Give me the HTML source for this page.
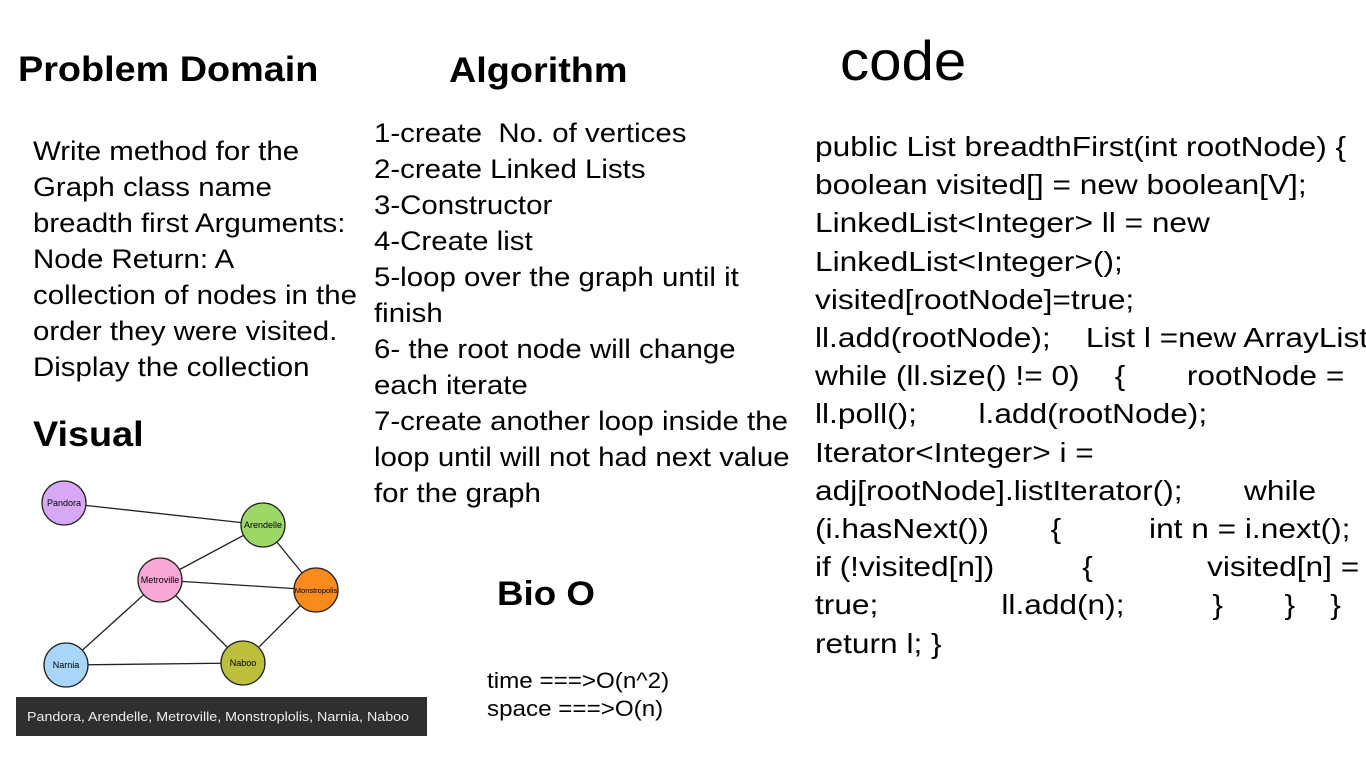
<!DOCTYPE html>
<html><head><meta charset="utf-8"><style>
body{margin:0;width:1366px;height:768px;background:#fff;position:relative;overflow:hidden;font-family:"Liberation Sans",sans-serif;color:#000}
.a{position:absolute;white-space:pre;transform-origin:0 0}
.h{font-weight:bold;font-size:35px;transform:scaleX(1.08)}
.t{font-size:27px;line-height:36px;transform:scaleX(1.09)}
</style></head><body>
<div class="a h" style="left:18px;top:50px">Problem Domain</div>
<div class="a h" style="left:449px;top:51px">Algorithm</div>
<div class="a" style="left:840px;top:28px;font-size:56px;transform:scaleX(1.04)">code</div>
<div class="a t" style="left:33px;top:133px">Write method for the
Graph class name
breadth first Arguments:
Node Return: A
collection of nodes in the
order they were visited.
Display the collection</div>
<div class="a h" style="left:33px;top:415px">Visual</div>
<div class="a t" style="left:374px;top:115px">1-create  No. of vertices
2-create Linked Lists
3-Constructor
4-Create list
5-loop over the graph until it
finish
6- the root node will change
each iterate
7-create another loop inside the
loop until will not had next value
for the graph</div>
<div class="a h" style="left:497px;top:575px;font-size:34px">Bio O</div>
<div class="a" style="left:487px;top:667px;font-size:22px;line-height:28px;transform:scaleX(1.1)">time ===&gt;O(n^2)
space ===&gt;O(n)</div>
<div class="a" style="left:815px;top:128px;line-height:38.2px;font-size:28px;transform:scaleX(1.13)">public List breadthFirst(int rootNode) {
boolean visited[] = new boolean[V];
LinkedList&lt;Integer&gt; ll = new
LinkedList&lt;Integer&gt;();
visited[rootNode]=true;
ll.add(rootNode);    List l =new ArrayList
while (ll.size() != 0)    {       rootNode =
ll.poll();       l.add(rootNode);
Iterator&lt;Integer&gt; i =
adj[rootNode].listIterator();       while
(i.hasNext())       {          int n = i.next();
if (!visited[n])          {             visited[n] =
true;              ll.add(n);          }       }    }
return l; }</div>
<svg class="a" style="left:0;top:0" width="440" height="740">
<g stroke="#222" stroke-width="1.3">
<line x1="64" y1="503" x2="263" y2="525"/>
<line x1="263" y1="525" x2="160" y2="580"/>
<line x1="263" y1="525" x2="316" y2="590"/>
<line x1="160" y1="580" x2="316" y2="590"/>
<line x1="160" y1="580" x2="66" y2="665"/>
<line x1="160" y1="580" x2="243" y2="663"/>
<line x1="66" y1="665" x2="243" y2="663"/>
<line x1="316" y1="590" x2="243" y2="663"/>
</g>
<g stroke="#222" stroke-width="1.3">
<circle cx="64" cy="503" r="22" fill="#d7a8f5"/>
<circle cx="263" cy="525" r="22" fill="#9dd866"/>
<circle cx="160" cy="580" r="22" fill="#f7a8d6"/>
<circle cx="316" cy="590" r="22" fill="#fb8a1c"/>
<circle cx="66" cy="665" r="22" fill="#a8d6f8"/>
<circle cx="243" cy="663" r="22" fill="#bcbf3c"/>
</g>
<g font-size="9" font-family="Liberation Sans" text-anchor="middle" fill="#000">
<text x="64" y="506">Pandora</text>
<text x="263" y="528">Arendelle</text>
<text x="160" y="583">Metroville</text>
<text x="316" y="593" font-size="7.5">Monstropolis</text>
<text x="66" y="668">Narnia</text>
<text x="243" y="666">Naboo</text>
</g>
<rect x="16" y="697" width="411" height="39" fill="#2f2f2f"/>
<text x="27" y="721" font-size="13" fill="#eee" font-family="Liberation Sans" textLength="382" lengthAdjust="spacingAndGlyphs">Pandora, Arendelle, Metroville, Monstroplolis, Narnia, Naboo</text>
</svg>
</body></html>
